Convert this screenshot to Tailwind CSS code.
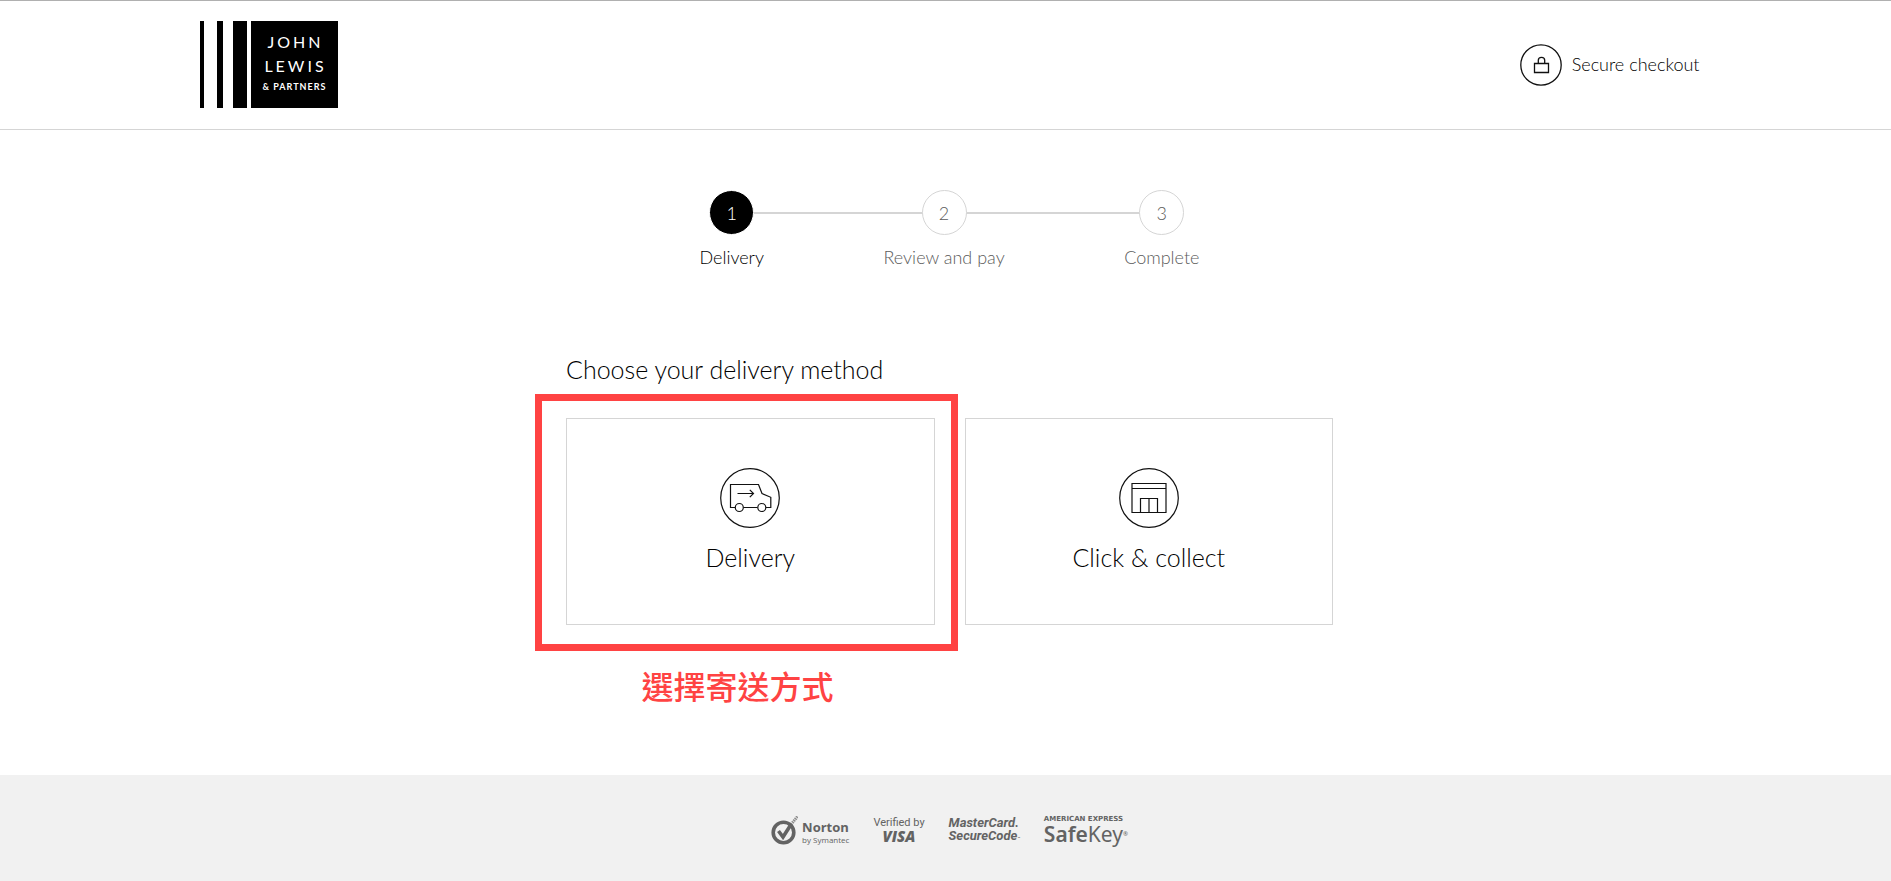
<!DOCTYPE html>
<html lang="en">
<head>
    <meta charset="UTF-8">
    <meta name="viewport" content="width=device-width, initial-scale=1.0">
    <title>Checkout - Delivery</title>
    <script src="https://cdn.jsdelivr.net/npm/@tailwindcss/browser@4"></script>
</head>
<body class="bg-white text-black font-light font-['Lato','Noto_Sans_CJK_TC',sans-serif]">
    <header class="border-t border-t-[#b0b0b0] border-b border-b-[#d5d5d5] pl-2">
        <div class="mx-auto max-w-[1500px] flex items-center justify-between pt-5 pb-[21px]">
            <!-- Logo -->
            <a href="#" class="flex h-[87px]" aria-label="John Lewis &amp; Partners">
                <span class="w-1 bg-black"></span>
                <span class="ml-[13px] w-[6px] bg-black"></span>
                <span class="ml-[10px] w-[14px] bg-black"></span>
                <span class="ml-1 w-[87px] bg-black text-white flex flex-col items-center pt-[9px] font-normal text-base leading-6 tracking-[3px]">
                    <span class="pl-[3px]">JOHN</span>
                    <span class="pl-[3px]">LEWIS</span>
                    <span class="pt-px text-[9px] leading-4 font-bold tracking-[1px] whitespace-nowrap pl-px">&amp; PARTNERS</span>
                </span>
            </a>
            <div class="flex items-center gap-[10px]">
                <svg class="size-[42px]" viewBox="0 0 42 42" fill="none" stroke="#111" stroke-width="1.3">
                    <circle cx="21" cy="21" r="20.2"/>
                    <path d="M14.5 19.5h14v9h-14zM18.3 19.5v-3.2a3.2 3 0 0 1 6.4 0v3.2"/>
                </svg>
                <p class="pb-[2px] text-lg">Secure checkout</p>
            </div>
        </div>
    </header>

    <main class="pl-2">
        <!-- Progress -->
        <ol class="relative mx-auto mt-15 max-w-[500px] flex justify-between text-[18px] leading-6 text-[#5c5c5c]">
            <li class="absolute left-8 right-10 top-[22px] h-[2px] bg-[#d5d5d5]" aria-hidden="true"></li>
            <li class="relative flex flex-col items-center gap-[10px] text-black" aria-current="step">
                <span class="size-[45px] rounded-full border border-white bg-black text-white flex items-center justify-center">1</span>
                Delivery
            </li>
            <li class="relative flex flex-col items-center gap-[10px]">
                <span class="size-[45px] rounded-full border border-[#d5d5d5] bg-white flex items-center justify-center">2</span>
                Review and pay
            </li>
            <li class="relative flex flex-col items-center gap-[10px]">
                <span class="size-[45px] rounded-full border border-[#d5d5d5] bg-white flex items-center justify-center">3</span>
                Complete
            </li>
        </ol>

        <!-- Delivery method -->
        <section class="mx-auto mt-[84px] max-w-[767px]">
            <h1 class="text-[25px] leading-8">Choose your delivery method</h1>
            <div class="mt-[33px] grid grid-cols-2 gap-[30px]">
                <div class="relative">
                    <button class="w-full border border-[#d5d5d5] pt-[49px] pb-[49px] flex flex-col items-center gap-3 text-[25px] leading-[35px] cursor-pointer">
                        <svg class="size-[60px]" viewBox="0 0 60 60" fill="none" stroke="#111" stroke-width="1.2">
                            <circle cx="30" cy="30" r="29.3"/>
                            <path d="M15 39.5h-4.5v-23h28l3.5 9 8.8 3.8v10.2H46M23.5 39.5h14"/>
                            <circle cx="19.3" cy="39.5" r="4"/>
                            <circle cx="41.8" cy="39.5" r="4"/>
                            <path d="M17.5 25.5h16M29.8 21.800l3.700 3.700-3.700 3.700"/>
                        </svg>
                        Delivery
                    </button>
                    <div class="absolute -left-[31px] -right-[23px] -top-6 -bottom-[26px] border-[7px] border-[#ff4343] pointer-events-none"></div>
                </div>
                <button class="border border-[#d5d5d5] pt-[49px] pb-[49px] flex flex-col items-center gap-3 text-[25px] leading-[35px] cursor-pointer">
                    <svg class="size-[60px]" viewBox="0 0 60 60" fill="none" stroke="#111" stroke-width="1.2">
                        <circle cx="30" cy="30" r="29.3"/>
                        <path d="M13 15.5h34v29H13zM13 20.5h34M21.5 44.5v-14h17v14M30 30.5v14"/>
                    </svg>
                    Click &amp; collect
                </button>
            </div>
            <p lang="zh-Hant" class="mt-9 w-[343px] text-center text-[32px] leading-12 font-medium text-[#ff4343] font-['Noto_Sans_CJK_TC',sans-serif]">選擇寄送方式</p>
        </section>
    </main>

    <!-- Security logos -->
    <footer class="mt-[66px] mb-px bg-[#f1f1f1] pl-2 text-[#636363]">
        <div class="h-[106px] pt-1 flex items-center justify-center gap-6">
            <div class="flex items-center gap-1">
                <svg class="w-[27px] h-[29px]" viewBox="0 0 27 29" fill="none" stroke="#636363">
                    <circle cx="12.5" cy="16.5" r="10.3" stroke-width="3.6"/>
                    <path d="M7.5 15l4.5 6 8-12.5" stroke-width="3.6"/>
                    <path d="M20 8.5l6.500-8" stroke-width="3" stroke-dasharray="1.5 .7" opacity=".7"/>
                </svg>
                <p class="pt-1 font-['Open_Sans',sans-serif] text-[8px] leading-[11px] font-normal"><b class="block text-[13px] leading-[14px] font-bold">Norton</b>by Symantec</p>
            </div>
            <p class="text-center font-['Roboto',sans-serif] text-[11px] leading-[13px] font-normal">Verified by<b class="block font-['Open_Sans',sans-serif] text-[15px] leading-[15px] font-extrabold italic">VISA</b></p>
            <p class="font-['Roboto',sans-serif] text-[13px] leading-[13px] font-bold italic"><span class="block">MasterCard.</span><span class="block">SecureCode<span class="text-[4px]">™</span></span></p>
            <p class="font-['Noto_Sans',sans-serif] text-[21px] font-normal"><span class="block font-['DejaVu_Sans',sans-serif] text-[7px] leading-[7px] font-bold">AMERICAN EXPRESS</span><span class="block leading-[22px]"><b class="font-semibold">Safe</b>Key<span class="align-top text-[6px]">®</span></span></p>
        </div>
    </footer>
</body>
</html>
